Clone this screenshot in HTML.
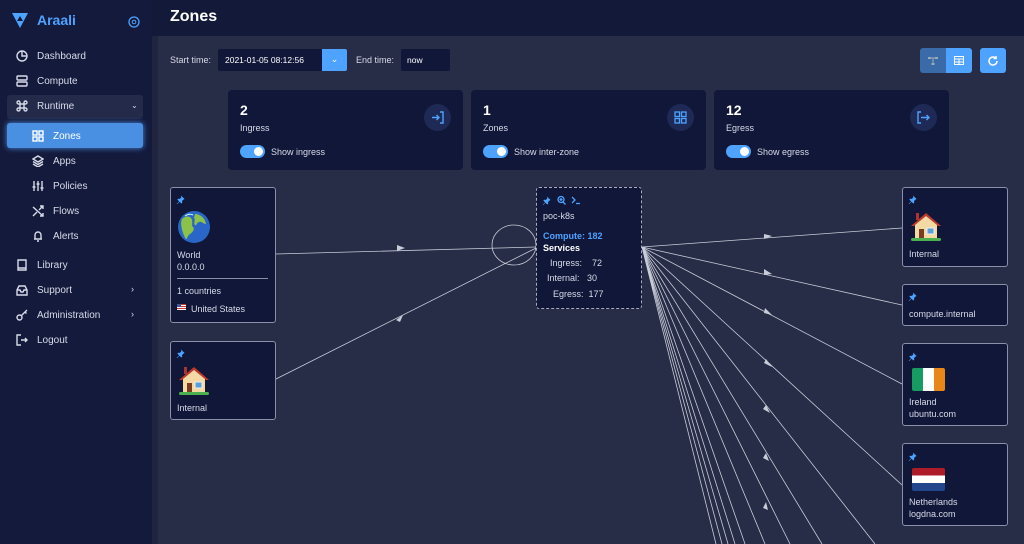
<!DOCTYPE html><html><head><meta charset="utf-8"><style>
*{box-sizing:border-box;margin:0;padding:0}
body{width:1024px;height:544px;overflow:hidden;background:#272c47;font-family:"Liberation Sans",sans-serif;color:#d8dbe8;position:relative}
.a{position:absolute}
.sb{left:0;top:0;width:152px;height:544px;background:#141a3c}
.hdr{left:0;top:0;width:1024px;height:36px;background:#131938}
.nav{left:16px;font-size:10px;color:#d8dbe8;display:flex;align-items:center;gap:9px}
.nav svg{width:12px;height:12px;stroke:#d8dbe8;fill:none;stroke-width:1.4}
.card{background:#111739;border-radius:4px}
.node{background:#111739;border:1px solid #8a90a8;border-radius:3px;font-size:8px;color:#d8dbe8}
.t{font-size:9px}
.tog{width:25px;height:13px;border-radius:7px;background:#4da3ff;position:absolute}
.tog:after{content:"";position:absolute;right:2px;top:2px;width:9px;height:9px;border-radius:50%;background:#fff}
.ic{width:27px;height:27px;border-radius:50%;background:#1e2a55;position:absolute;display:flex;align-items:center;justify-content:center}
</style></head><body>
<svg width="0" height="0" style="position:absolute"><defs><symbol id="pin" viewBox="0 0 10 10"><path d="M5.5 0.5l4 4-1.2.6-1.6 1.6.2 2-1 .8-2-2-3 3-.4-.4 3-3-2-2 .8-1 2 .2 1.6-1.6z" fill="#4da3ff"/></symbol></defs></svg>
<div class="a hdr"></div>
<div class="a sb"></div>
<div class="a" style="left:152px;top:36px;width:6px;height:508px;background:#20253f"></div>
<svg class="a" style="left:11px;top:11px" width="18" height="18" viewBox="0 0 18 18"><path d="M1 2h16L9 17z" fill="#4da3ff"/><path d="M9 5l-3 5h6z" fill="#141a3c"/></svg>
<div class="a" style="left:37px;top:12px;font-size:14px;font-weight:bold;color:#4da3ff">Araali</div>
<svg class="a" style="left:128px;top:16px" width="12" height="12"><circle cx="6" cy="6" r="5" stroke="#4da3ff" fill="none" stroke-width="1.3"/><circle cx="6" cy="6" r="1.8" stroke="#4da3ff" fill="none"/></svg>
<div class="a" style="left:170px;top:8px;font-size:16px;font-weight:bold;color:#fff">Zones</div>

<div class="a nav" style="top:50px"><svg viewBox="0 0 12 12"><circle cx="6" cy="6" r="5"/><path d="M6 1v5h5"/></svg>Dashboard</div>
<div class="a nav" style="top:75px"><svg viewBox="0 0 12 12"><rect x="1" y="1" width="10" height="4" rx="1"/><rect x="1" y="7" width="10" height="4" rx="1"/></svg>Compute</div>
<div class="a" style="left:7px;top:95px;width:136px;height:24px;background:#232a4a;border-radius:3px"></div>
<div class="a nav" style="top:100px"><svg viewBox="0 0 12 12"><path d="M4 4h4v4H4zM4 4V2.5A1.5 1.5 0 1 0 2.5 4H4M8 4V2.5A1.5 1.5 0 1 1 9.5 4H8M4 8v1.5A1.5 1.5 0 1 1 2.5 8H4M8 8v1.5A1.5 1.5 0 1 0 9.5 8H8"/></svg>Runtime</div>
<div class="a" style="left:131px;top:101px;font-size:8px">⌄</div>
<div class="a" style="left:7px;top:123px;width:136px;height:25px;background:#4a90e2;border-radius:3px;box-shadow:0 0 6px #4a90e2"></div>
<div class="a nav" style="left:32px;top:130px;color:#fff"><svg viewBox="0 0 12 12" style="stroke:#fff"><rect x="1" y="1" width="4" height="4"/><rect x="7" y="1" width="4" height="4"/><rect x="1" y="7" width="4" height="4"/><rect x="7" y="7" width="4" height="4"/></svg>Zones</div>
<div class="a nav" style="left:32px;top:155px"><svg viewBox="0 0 12 12"><path d="M6 1l5 3-5 3-5-3zM1 6.5l5 3 5-3M1 9l5 3 5-3"/></svg>Apps</div>
<div class="a nav" style="left:32px;top:180px"><svg viewBox="0 0 12 12"><path d="M2 1v10M6 1v10M10 1v10M0.5 7h3M4.5 4h3M8.5 8h3"/></svg>Policies</div>
<div class="a nav" style="left:32px;top:205px"><svg viewBox="0 0 12 12"><path d="M1 2l10 9M8 11h3V8M1 11l4-4M7 5l4-4M8 1h3v3"/></svg>Flows</div>
<div class="a nav" style="left:32px;top:230px"><svg viewBox="0 0 12 12"><path d="M3 9V5a3 3 0 0 1 6 0v4H2h8M5 11h2"/></svg>Alerts</div>
<div class="a nav" style="top:259px"><svg viewBox="0 0 12 12"><path d="M2 1h8v10H2zM2 9h8"/></svg>Library</div>
<div class="a nav" style="top:284px"><svg viewBox="0 0 12 12"><path d="M1 6l2-4h6l2 4v5H1zM1 6h3l1 2h2l1-2h3"/></svg>Support</div>
<div class="a" style="left:131px;top:284px;font-size:9px">›</div>
<div class="a nav" style="top:309px"><svg viewBox="0 0 12 12"><circle cx="3.5" cy="8.5" r="2.5"/><path d="M5.5 6.5L11 1M9 3l1.5 1.5"/></svg>Administration</div>
<div class="a" style="left:131px;top:309px;font-size:9px">›</div>
<div class="a nav" style="top:334px"><svg viewBox="0 0 12 12"><path d="M5 1H1v10h4M5 6h6M9 4l2 2-2 2"/></svg>Logout</div>

<div class="a" style="left:170px;top:55px;font-size:9px">Start time:</div>
<div class="a" style="left:218px;top:49px;width:106px;height:22px;background:#111739;border-radius:2px;font-size:8.5px;color:#fff;padding:6px 0 0 7px">2021-01-05 08:12:56</div>
<div class="a" style="left:322px;top:49px;width:25px;height:22px;background:#4da3ff;border-radius:0 2px 2px 0;color:#fff;font-size:9px;text-align:center;line-height:20px">⌄</div>
<div class="a" style="left:356px;top:55px;font-size:9px">End time:</div>
<div class="a" style="left:401px;top:49px;width:49px;height:22px;background:#111739;border-radius:2px;font-size:8.5px;color:#fff;padding:6px 0 0 6px">now</div>
<div class="a" style="left:920px;top:48px;width:26px;height:25px;background:#3a6aa8;border-radius:3px 0 0 3px"></div>
<svg class="a" style="left:927px;top:55px" width="12" height="12"><g fill="#9ab" ><rect x="1" y="2" width="3" height="2"/><rect x="8" y="2" width="3" height="2"/><rect x="4.5" y="8" width="3" height="2"/></g><path d="M4 3h4M6 3v5" stroke="#9ab"/></svg>
<div class="a" style="left:946px;top:48px;width:26px;height:25px;background:#4da3ff;border-radius:0 3px 3px 0"></div>
<svg class="a" style="left:954px;top:56px" width="10" height="9"><rect x="0.5" y="0.5" width="9" height="8" fill="none" stroke="#fff"/><path d="M0 3h10M0 6h10M5 3v6" stroke="#fff"/></svg>
<div class="a" style="left:980px;top:48px;width:26px;height:25px;background:#4da3ff;border-radius:3px"></div>
<svg class="a" style="left:987px;top:55px" width="12" height="12"><path d="M10 6a4 4 0 1 1-1.5-3.1M9 1v2.5H6.5" fill="none" stroke="#fff" stroke-width="1.5"/></svg>

<div class="a card" style="left:228px;top:90px;width:235px;height:80px"></div>
<div class="a" style="left:240px;top:102px;font-size:14px;font-weight:bold;color:#fff">2</div>
<div class="a" style="left:240px;top:123px;font-size:9px">Ingress</div>
<div class="tog" style="left:240px;top:145px"></div>
<div class="a" style="left:271px;top:147px;font-size:9px">Show ingress</div>
<div class="ic" style="left:424px;top:104px"><svg width="13" height="13"><path d="M1 6.5h7M5.5 4l2.5 2.5-2.5 2.5M9 1h3v11H9" fill="none" stroke="#4da3ff" stroke-width="1.4"/></svg></div>
<div class="a card" style="left:471px;top:90px;width:235px;height:80px"></div>
<div class="a" style="left:483px;top:102px;font-size:14px;font-weight:bold;color:#fff">1</div>
<div class="a" style="left:483px;top:123px;font-size:9px">Zones</div>
<div class="tog" style="left:483px;top:145px"></div>
<div class="a" style="left:514px;top:147px;font-size:9px">Show inter-zone</div>
<div class="ic" style="left:667px;top:104px"><svg width="13" height="13" fill="none" stroke="#4da3ff" stroke-width="1.3"><rect x="1" y="1" width="4.5" height="4.5"/><rect x="7.5" y="1" width="4.5" height="4.5"/><rect x="1" y="7.5" width="4.5" height="4.5"/><rect x="7.5" y="7.5" width="4.5" height="4.5"/></svg></div>
<div class="a card" style="left:714px;top:90px;width:235px;height:80px"></div>
<div class="a" style="left:726px;top:102px;font-size:14px;font-weight:bold;color:#fff">12</div>
<div class="a" style="left:726px;top:123px;font-size:9px">Egress</div>
<div class="tog" style="left:726px;top:145px"></div>
<div class="a" style="left:757px;top:147px;font-size:9px">Show egress</div>
<div class="ic" style="left:910px;top:104px"><svg width="13" height="13"><path d="M4 1H1v11h3M4 6.5h8M9.5 4l2.5 2.5-2.5 2.5" fill="none" stroke="#4da3ff" stroke-width="1.4"/></svg></div>

<svg class="a" style="left:0;top:0" width="1024" height="544" stroke="#c8ccd8" stroke-width="0.8" fill="none">
<path d="M276 254L536 247M276 379L536 248"/>
<ellipse cx="514" cy="245" rx="22" ry="20"/>
<path d="M642 247L902 228M642 247L902 305M642 247L902 384M642 247L902 485M642 247L875 544M642 247L822 544M642 247L790 544M642 247L765 544M642 247L745 544M642 247L735 544M642 247L728 544M642 247L722 544M642 247L716 544"/>
<g fill="#c8ccd8" stroke="none">
<path d="M397 245l8 3-8 3zM396 320l7-5-3 7zM764 234l8 2-8 3zM764 269l8 5-8 1zM765 308l7 7-8-2zM766 359l6 8-8-4zM766 405l4 8-7-4zM766 453l3 8-6-3zM766 502l2 8-5-2z"/>
</g>
</svg>

<div class="a node" style="left:170px;top:187px;width:106px;height:136px"></div>
<svg class="a" style="left:176px;top:195px" width="9" height="9"><use href="#pin"/></svg>
<svg class="a" style="left:177px;top:210px" width="34" height="34"><circle cx="17" cy="17" r="16" fill="#2a66c8"/><path d="M5 9c4-4 9-3 10 1s-1 5 1 7 0 5-3 7-3 6-4 5S2 16 5 9zM18 4c5 0 10 4 11 10-3 0-4-3-7-2s-2 4-4 3 1-6-1-7z" fill="#8bc34a"/><path d="M8 6c3-2 6-2 8-1" stroke="#cfe" stroke-width="1" fill="none"/></svg>
<div class="a t" style="left:177px;top:250px">World</div>
<div class="a t" style="left:177px;top:262px">0.0.0.0</div>
<div class="a" style="left:177px;top:278px;width:91px;height:1px;background:#8a90a8"></div>
<div class="a t" style="left:177px;top:286px">1 countries</div>
<div class="a" style="left:177px;top:304px;width:9px;height:6px;background:repeating-linear-gradient(#c33 0 1px,#fff 1px 2px)"></div>
<div class="a" style="left:177px;top:304px;width:4px;height:3px;background:#3c5a9a"></div>
<div class="a t" style="left:191px;top:304px">United States</div>

<div class="a node" style="left:170px;top:341px;width:106px;height:79px"></div>
<svg class="a" style="left:176px;top:349px" width="9" height="9"><use href="#pin"/></svg>
<svg class="a" style="left:177px;top:364px" width="34" height="34"><rect x="7" y="3" width="3" height="7" fill="#a33"/><path d="M2 16L17 3l15 13h-3L17 6 5 16z" fill="#c0392b"/><path d="M6 15L17 6l11 9v15H6z" fill="#f3d9a4"/><rect x="10" y="19" width="5" height="11" fill="#7a3b1e"/><rect x="18" y="18" width="7" height="6" fill="#5aa0d8" stroke="#eee"/><rect x="2" y="28" width="30" height="3" rx="1.5" fill="#4caf50"/></svg>
<div class="a t" style="left:177px;top:403px">Internal</div>

<div class="a node" style="left:536px;top:187px;width:106px;height:122px;border:1px dashed #aab"></div>
<svg class="a" style="left:542px;top:196px" width="9" height="9"><use href="#pin"/></svg>
<svg class="a" style="left:556px;top:195px" width="30" height="10" fill="none" stroke="#4da3ff" stroke-width="1.3"><circle cx="5" cy="4.5" r="3"/><path d="M7 7l2.5 2.5M3.5 4.5h3M5 3v3M16 2l3 3-3 3M20 8.5h4"/></svg>
<div class="a t" style="left:543px;top:211px">poc-k8s</div>
<div class="a t" style="left:543px;top:231px;color:#4da3ff;font-weight:bold">Compute: 182</div>
<div class="a t" style="left:543px;top:243px;color:#fff;font-weight:bold">Services</div>
<div class="a t" style="left:550px;top:258px">Ingress:&nbsp;&nbsp;&nbsp; 72</div>
<div class="a t" style="left:547px;top:273px">Internal:&nbsp;&nbsp; 30</div>
<div class="a t" style="left:553px;top:289px">Egress:&nbsp; 177</div>

<div class="a node" style="left:902px;top:187px;width:106px;height:80px"></div>
<svg class="a" style="left:908px;top:195px" width="9" height="9"><use href="#pin"/></svg>
<svg class="a" style="left:909px;top:210px" width="34" height="34"><rect x="7" y="3" width="3" height="7" fill="#a33"/><path d="M2 16L17 3l15 13h-3L17 6 5 16z" fill="#c0392b"/><path d="M6 15L17 6l11 9v15H6z" fill="#f3d9a4"/><rect x="10" y="19" width="5" height="11" fill="#7a3b1e"/><rect x="18" y="18" width="7" height="6" fill="#5aa0d8" stroke="#eee"/><rect x="2" y="28" width="30" height="3" rx="1.5" fill="#4caf50"/></svg>
<div class="a t" style="left:909px;top:249px">Internal</div>

<div class="a node" style="left:902px;top:284px;width:106px;height:42px"></div>
<svg class="a" style="left:908px;top:292px" width="9" height="9"><use href="#pin"/></svg>
<div class="a t" style="left:909px;top:309px">compute.internal</div>

<div class="a node" style="left:902px;top:343px;width:106px;height:83px"></div>
<svg class="a" style="left:908px;top:352px" width="9" height="9"><use href="#pin"/></svg>
<div class="a" style="left:912px;top:368px;width:33px;height:23px;border-radius:2px;background:linear-gradient(90deg,#169b62 33%,#fff 33% 66%,#e8861a 66%)"></div>
<div class="a t" style="left:909px;top:397px">Ireland</div>
<div class="a t" style="left:909px;top:409px">ubuntu.com</div>

<div class="a node" style="left:902px;top:443px;width:106px;height:83px"></div>
<svg class="a" style="left:908px;top:452px" width="9" height="9"><use href="#pin"/></svg>
<div class="a" style="left:912px;top:468px;width:33px;height:23px;border-radius:2px;background:linear-gradient(#ae1c28 33%,#fff 33% 66%,#21468b 66%)"></div>
<div class="a t" style="left:909px;top:497px">Netherlands</div>
<div class="a t" style="left:909px;top:509px">logdna.com</div>
</body></html>
